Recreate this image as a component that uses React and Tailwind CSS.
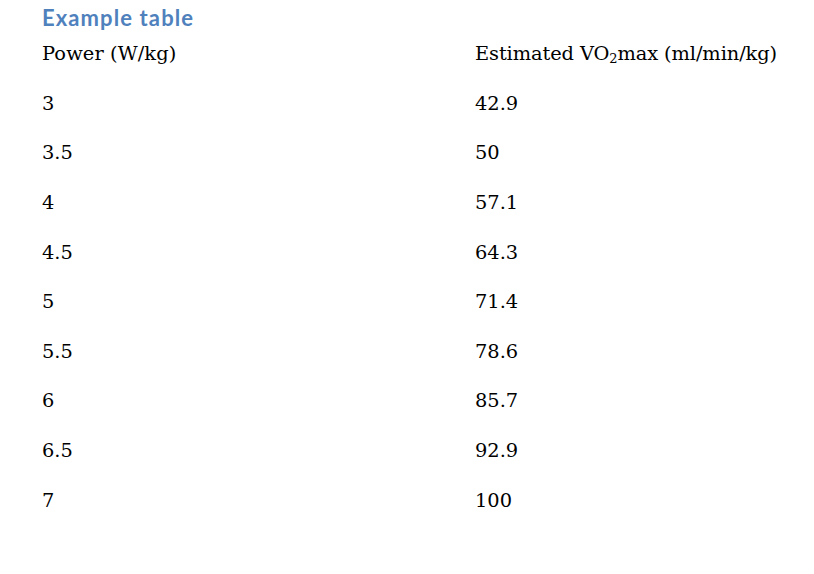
import React from "react";

const rows = [
  ["3", "42.9"],
  ["3.5", "50"],
  ["4", "57.1"],
  ["4.5", "64.3"],
  ["5", "71.4"],
  ["5.5", "78.6"],
  ["6", "85.7"],
  ["6.5", "92.9"],
  ["7", "100"],
];

export default function App() {
  return (
    <div className="w-[814px] h-[574px] bg-white pl-[42px] overflow-hidden">
      <div className="h-[28px] leading-[22px] pt-[7px] text-[22px] tracking-[1.1px] font-bold text-[#4f81bd] font-['Lato',sans-serif]">
        Example table
      </div>
      <div className="pt-[1px] font-['DejaVu_Serif',serif] text-[19.4px] text-black">
        <div className="grid grid-cols-[433px_1fr] h-[49.6px] items-center">
          <div className="tracking-[0.1px]">Power (W/kg)</div>
          <div className="tracking-[-0.1px]">
            Estimated VO<span className="text-[13px] relative top-[3px]">2</span>max (ml/min/kg)
          </div>
        </div>
        {rows.map(([a, b]) => (
          <div key={a} className="grid grid-cols-[433px_1fr] h-[49.6px] items-center">
            <div>{a}</div>
            <div>{b}</div>
          </div>
        ))}
      </div>
    </div>
  );
}
